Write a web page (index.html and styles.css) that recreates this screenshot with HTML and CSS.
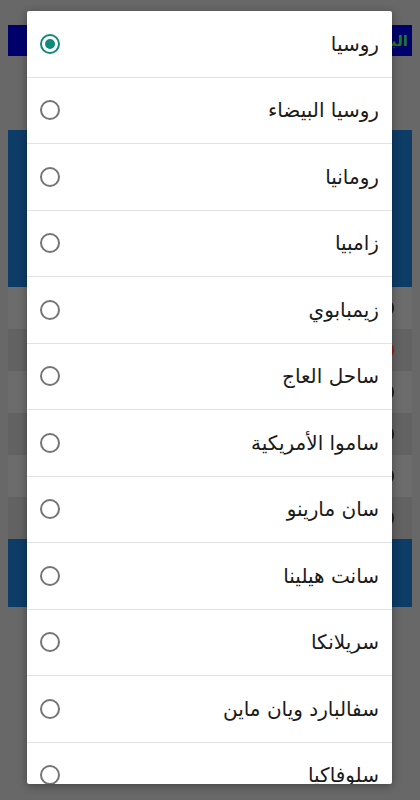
FILE: index.html
```html
<!DOCTYPE html>
<html lang="ar">
<head>
    <meta charset="utf-8">
    <title>اختر البلد</title>
    <meta name="viewport" content="width=device-width, initial-scale=1">
    <link rel="stylesheet" href="styles.css">
</head>
<body>
    <!-- page behind the dialog (already dimmed) -->
    <div class="page">
        <div class="topbar"><span class="topbar-text">البلد</span></div>
        <div class="hero"></div>
        <div class="rows">
            <div class="row light"><i class="dot"></i></div>
            <div class="row dark"><i class="dot red"></i></div>
            <div class="row light"><i class="dot"></i></div>
            <div class="row dark"><i class="dot"></i></div>
            <div class="row light"><i class="dot"></i></div>
            <div class="row dark"><i class="dot"></i></div>
        </div>
        <div class="button-block"></div>
    </div>

    <div class="dialog">
        <ul class="choices" dir="ltr">
            <li class="choice checked"><svg class="radio" width="22" height="22" viewBox="0 0 22 22"><circle cx="11" cy="11" r="9"/><circle class="inner" cx="11" cy="11" r="5"/></svg><span dir="rtl">روسيا</span></li>
            <li class="choice"><svg class="radio" width="22" height="22" viewBox="0 0 22 22"><circle cx="11" cy="11" r="9"/></svg><span dir="rtl">روسيا البيضاء</span></li>
            <li class="choice"><svg class="radio" width="22" height="22" viewBox="0 0 22 22"><circle cx="11" cy="11" r="9"/></svg><span dir="rtl">رومانيا</span></li>
            <li class="choice"><svg class="radio" width="22" height="22" viewBox="0 0 22 22"><circle cx="11" cy="11" r="9"/></svg><span dir="rtl">زامبيا</span></li>
            <li class="choice"><svg class="radio" width="22" height="22" viewBox="0 0 22 22"><circle cx="11" cy="11" r="9"/></svg><span dir="rtl">زيمبابوي</span></li>
            <li class="choice"><svg class="radio" width="22" height="22" viewBox="0 0 22 22"><circle cx="11" cy="11" r="9"/></svg><span dir="rtl">ساحل العاج</span></li>
            <li class="choice"><svg class="radio" width="22" height="22" viewBox="0 0 22 22"><circle cx="11" cy="11" r="9"/></svg><span dir="rtl">ساموا الأمريكية</span></li>
            <li class="choice"><svg class="radio" width="22" height="22" viewBox="0 0 22 22"><circle cx="11" cy="11" r="9"/></svg><span dir="rtl">سان مارينو</span></li>
            <li class="choice"><svg class="radio" width="22" height="22" viewBox="0 0 22 22"><circle cx="11" cy="11" r="9"/></svg><span dir="rtl">سانت هيلينا</span></li>
            <li class="choice"><svg class="radio" width="22" height="22" viewBox="0 0 22 22"><circle cx="11" cy="11" r="9"/></svg><span dir="rtl">سريلانكا</span></li>
            <li class="choice"><svg class="radio" width="22" height="22" viewBox="0 0 22 22"><circle cx="11" cy="11" r="9"/></svg><span dir="rtl">سفالبارد ويان ماين</span></li>
            <li class="choice"><svg class="radio" width="22" height="22" viewBox="0 0 22 22"><circle cx="11" cy="11" r="9"/></svg><span dir="rtl">سلوفاكيا</span></li>
        </ul>
    </div>
</body>
</html>
```

FILE: styles.css
```css
*{
    padding: 0;
    margin: 0;
    box-sizing: border-box;
}
body{
    width: 420px;
    height: 800px;
    overflow: hidden;
    background: #686868;
    font-family: "DejaVu Sans", "Noto Sans", sans-serif;
}
.page{
    padding: 25px 8px 0 8px;
}
.topbar{
    height: 31px;
    background: #00006c;
    display: flex;
    align-items: center;
    justify-content: flex-end;
    padding-right: 4px;
}
.topbar-text{
    color: #1f7a2a;
    font-size: 15px;
    font-weight: bold;
}
.hero{
    margin-top: 74px;
    height: 157px;
    background: #0d3c66;
}
.rows{
    display: flex;
    flex-direction: column;
}
.row{
    height: 42px;
    position: relative;
}
.row.light{
    background: #6c6c6c;
}
.row.dark{
    background: #626262;
}
.dot{
    position: absolute;
    left: 376px;
    top: 14px;
    width: 10px;
    height: 14px;
    border-radius: 50%;
    background: #1c1c1c;
}
.dot.red{
    background: #8a2418;
}
.button-block{
    height: 68px;
    background: #0d3c66;
}

.dialog{
    position: absolute;
    top: 11px;
    left: 27px;
    width: 365px;
    height: 773px;
    background: #fff;
    border-radius: 2px;
    overflow: hidden;
    box-shadow: 0 2px 8px rgba(0,0,0,0.35);
}
.choices{
    list-style: none;
}
.choice{
    height: 66.5px;
    display: flex;
    align-items: center;
    justify-content: space-between;
    padding: 0 13px 0 12px;
    border-bottom: 1px solid #e2e2e2;
    color: #1a1a1a;
    font-size: 20px;
}
.radio circle{
    fill: none;
    stroke: #757575;
    stroke-width: 2;
}
.checked .radio circle{
    stroke: #0f8a7b;
}
.checked .radio .inner{
    fill: #0f8a7b;
    stroke: none;
}
```
